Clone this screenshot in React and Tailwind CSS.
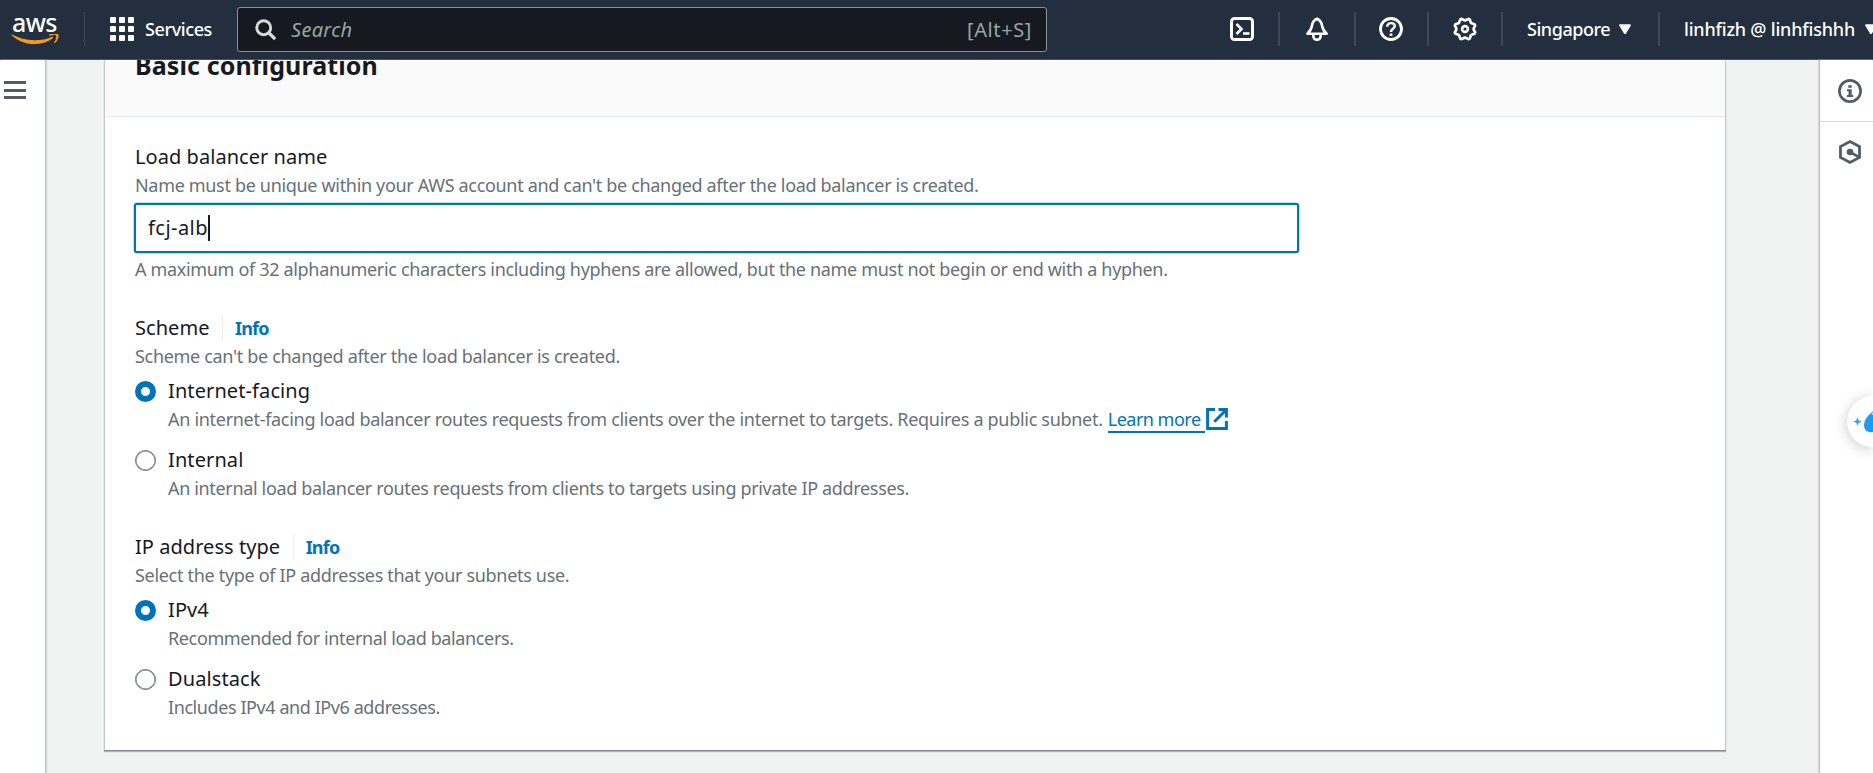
function Separator({ className }) {
  return <div className={`h-[34px] w-0.5 shrink-0 bg-[#414750] ${className}`} />;
}

function AwsLogo() {
  return (
    <div className="ml-[11px] flex w-12 shrink-0 flex-col">
      <span className="h-[21px] pl-px text-[25px] leading-[18px] font-medium tracking-[-0.6px] text-white">aws</span>
      <svg className="h-[11px] w-12" viewBox="0 0 48 11" fill="none">
        <path d="M0.6 1.2C0.2 0.8 0.6 0.2 1.4 0.6C7.5 4 15 6.3 23.5 6.3C30 6.3 35.500 5.200 40.600 3C41.900 2.500 42.800 3.600 41.500 4.500C36.500 8.200 30 10.100 23.500 10.100C14.500 10.100 6.500 6.800 0.600 1.200Z" fill="#f7981f" />
        <path d="M38.800 1.100C42 -0.200 45.500 0 46.500 0.500C47.400 1.500 46.400 6 43.800 8.200" stroke="#f7981f" strokeWidth="1.500" strokeLinecap="round" />
        <path d="M44 0.200H47V3.500L44.500 6L45.200 2Z" fill="#f7981f" />
      </svg>
    </div>
  );
}

function GridIcon() {
  return (
    <div className="ml-[25px] grid size-6 shrink-0 grid-cols-3 gap-[3px]">
      {[...Array(9).keys()].map((i) => (
        <span key={i} className="size-1.5 rounded-[1px] bg-white" />
      ))}
    </div>
  );
}

function IconSvg({ className, children, strokeWidth = 3, size = 24 }) {
  return (
    <svg className={`shrink-0 ${className}`} width={size} height={size} viewBox="0 0 24 24" fill="none" stroke="currentColor" strokeWidth={strokeWidth}>
      {children}
    </svg>
  );
}

function Caret({ className }) {
  return (
    <svg className={`h-[11px] w-3 shrink-0 ${className}`} viewBox="0 0 12 11" fill="currentColor">
      <path d="M0.700 0.300H11.300L12 1.300L6.700 10H5.300L0 1.300Z" />
    </svg>
  );
}

const gearPoints = [...Array(32).keys()]
  .map((i) => {
    const angle = ((i + 0.5) * Math.PI) / 16 - Math.PI / 8;
    const radius = i % 4 < 2 ? 8.7 : 10.7;
    const turn = angle + (i % 2 ? -0.03 : 0.03) + Math.PI / 16;
    return `${(12 + radius * Math.cos(turn)).toFixed(2)},${(12 + radius * Math.sin(turn)).toFixed(2)}`;
  })
  .join(" ");

function Header() {
  return (
    <header className="flex h-[60px] shrink-0 items-center overflow-hidden border-b border-[#49535f] bg-[#232f3e] pb-px text-white">
      <AwsLogo />
      <div className="ml-[25px] h-[34px] w-px shrink-0 bg-[#414750]" />
      <GridIcon />
      <span className="ml-[11px] w-[68px] shrink-0 text-[18px] leading-6 font-medium tracking-[-0.4px] whitespace-nowrap">Services</span>
      <div className="mt-px ml-[24px] flex h-[45px] w-[810px] shrink-0 items-center rounded-[3px] border border-[#879596] bg-[#16191f] pr-[14px] pl-[17px] text-[#95a5a6]">
        <IconSvg className="text-[#d5dbdb]" size={22} strokeWidth={3.2}>
          <circle cx="9.500" cy="9.500" r="7.600" />
          <path d="M15 15L22 22" strokeWidth="3.600" />
        </IconSvg>
        <span className="ml-[14px] flex-1 text-[20px] leading-7 tracking-[0.3px] italic">Search</span>
        <span className="text-[20px] leading-7 tracking-[0.6px]">[Alt+S]</span>
      </div>
      <IconSvg className="ml-[183px]">
        <rect x="1.500" y="1.500" width="21" height="21" rx="3" />
        <path d="M6.500 7L11.500 12L6.500 17" strokeWidth="2.600" />
        <path d="M13 16.500H19.500" strokeWidth="2.600" />
      </IconSvg>
      <Separator className="ml-6" />
      <IconSvg className="ml-[25px]" strokeWidth={2.6}>
        <path d="M2.300 16.700H21.700C19 14.500 17.600 12.500 17 8.500C16.600 5.200 14.800 3 12 1.700C9.200 3 7.400 5.200 7 8.500C6.400 12.500 5 14.500 2.300 16.700Z" strokeLinejoin="round" />
        <path d="M8.300 17V19C8.300 21.300 10 22.700 12 22.700C14 22.700 15.700 21.300 15.700 19V17" />
      </IconSvg>
      <Separator className="ml-[25px]" />
      <IconSvg className="ml-[23px]" strokeWidth={2.8}>
        <circle cx="12" cy="12" r="10.500" />
        <path d="M8.200 9.800C8.200 7.300 9.700 6.100 12 6.100C14.300 6.100 15.800 7.300 15.800 9.100C15.800 11.500 12 11.600 12 15" strokeWidth="2.400" />
        <path d="M12 16.500V19" strokeWidth="2.800" />
      </IconSvg>
      <Separator className="ml-6" />
      <IconSvg className="ml-6" strokeWidth={2.7}>
        <polygon points={gearPoints} strokeLinejoin="round" />
        <circle cx="12" cy="12" r="2.900" strokeWidth="2.600" />
      </IconSvg>
      <Separator className="ml-6" />
      <span className="ml-[24px] w-[84px] shrink-0 text-[18px] leading-6 font-medium tracking-[-0.45px] whitespace-nowrap">Singapore</span>
      <Caret className="ml-2" />
      <Separator className="ml-[27px]" />
      <span className="ml-[24px] w-[172px] shrink-0 text-[18px] leading-6 font-medium tracking-[-0.2px] whitespace-nowrap">linhfizh @ linhfishhh</span>
      <Caret className="ml-[9px]" />
    </header>
  );
}

function FieldLabel({ children, info }) {
  return (
    <div className="flex h-[30px] items-center pt-0.5 text-[20px] leading-[30px] tracking-[0.05px]">
      {children}
      {info && (
        <span className="ml-[12.5px] flex h-[26px] items-center border-l border-[#eaeded] pl-3 text-[18px] leading-[26px] font-bold tracking-[-0.8px] text-[#0073bb]">
          Info
        </span>
      )}
    </div>
  );
}

function Description({ className, children }) {
  return <p className={`flex h-[29px] text-[18px] leading-[29px] whitespace-nowrap text-[#687078] ${className}`}>{children}</p>;
}

function RadioOption({ checked, label, children }) {
  return (
    <div className="flex">
      {checked ? (
        <span className="mt-1.5 size-[21px] shrink-0 rounded-full border-[6px] border-[#0073bb] bg-white" />
      ) : (
        <span className="mt-1.5 size-[21px] shrink-0 rounded-full border border-[#687078] bg-white shadow-[inset_0_0_0_0.5px_#687078]" />
      )}
      <div className="ml-3">
        <div className="h-[30px] text-[20px] leading-8 tracking-[0.1px]">{label}</div>
        {children}
      </div>
    </div>
  );
}

function ExternalIcon() {
  return (
    <svg className="mt-[3px] ml-px size-[22px] text-[#0073bb]" viewBox="0 0 22 22" fill="none" stroke="currentColor" strokeWidth="3">
      <path d="M9 1.600H1.600V20.400H20.400V13" />
      <path d="M12.500 1.600H20.400V9.500M20 2L8.300 13.700" />
    </svg>
  );
}

function ConfigCard() {
  return (
    <section className="ml-[58px] flex h-[690px] w-[1622px] shrink-0 flex-col border-x border-[#c3c9c9] bg-white shadow-[0_1px_0_#7d8998,0_2px_1px_#aab7b8]">
      <div className="h-[57px] shrink-0 overflow-hidden border-b border-[#e4e9e9] bg-[#fafafa] pl-[30px]">
        <h2 className="-mt-3 text-[25px] leading-[34px] font-bold tracking-[0.11px]">Basic configuration</h2>
      </div>
      <div className="flex flex-col pt-6 pl-[30px]">
        <FieldLabel>Load balancer name</FieldLabel>
        <Description className="tracking-[-0.325px]">
          Name must be unique within your AWS account and can't be changed after the load balancer is created.
        </Description>
        <div className="mt-[3px] -ml-px flex h-[50px] w-[1165px] items-center rounded-[3px] border-2 border-[#0073bb] bg-white pl-3 text-[20px] leading-7 tracking-[0.45px] shadow-[0_0_0_0.5px_#0073bb80]">
          fcj-alb
          <span className="h-[26px] w-0.5 bg-[#16191f]" />
        </div>
        <Description className="mt-0.5 tracking-[-0.328px]">
          A maximum of 32 alphanumeric characters including hyphens are allowed, but the name must not begin or end with a hyphen.
        </Description>

        <div className="mt-7">
          <FieldLabel info>Scheme</FieldLabel>
          <Description className="tracking-[-0.315px]">Scheme can't be changed after the load balancer is created.</Description>
          <div className="mt-1 flex flex-col gap-2.5">
            <RadioOption checked label="Internet-facing">
              <Description className="tracking-[-0.297px]">
                An internet-facing load balancer routes requests from clients over the internet to targets. Requires a public subnet.
                <span className="ml-[5px] h-[28px] w-[97px] border-b-2 border-[#0073bb] tracking-[-0.5px] text-[#0073bb]">Learn more</span>
                <ExternalIcon />
              </Description>
            </RadioOption>
            <RadioOption label="Internal">
              <Description className="tracking-[-0.34px]">
                An internal load balancer routes requests from clients to targets using private IP addresses.
              </Description>
            </RadioOption>
          </div>
        </div>

        <div className="mt-7">
          <FieldLabel info>IP address type</FieldLabel>
          <Description className="tracking-[-0.31px]">Select the type of IP addresses that your subnets use.</Description>
          <div className="mt-1 flex flex-col gap-2.5">
            <RadioOption checked label="IPv4">
              <Description className="tracking-[-0.37px]">Recommended for internal load balancers.</Description>
            </RadioOption>
            <RadioOption label="Dualstack">
              <Description className="tracking-[-0.42px]">Includes IPv4 and IPv6 addresses.</Description>
            </RadioOption>
          </div>
        </div>
      </div>
    </section>
  );
}

function HelpRail() {
  return (
    <aside className="flex w-[54px] shrink-0 flex-col border-l border-[#b9c0c0] bg-white text-[#545b64] shadow-[-1px_0_1px_#d5dbdb]">
      <div className="flex h-[62px] shrink-0 items-center border-b border-[#d5dbdb] pl-[18px]">
        <IconSvg strokeWidth={2.7}>
          <circle cx="12" cy="12" r="10.600" />
          <path d="M10.300 6.200H13.700V8.800H10.300Z" fill="currentColor" stroke="none" />
          <path d="M9 10.300H13.700V16H15.200V18H9V16H10.500V12.300H9Z" fill="currentColor" stroke="none" />
        </IconSvg>
      </div>
      <div className="flex h-[60px] shrink-0 items-center pl-[18px]">
        <IconSvg strokeWidth={2.8}>
          <path d="M12 1.600L21.500 6.600V17.400L12 22.400L2.500 17.400V6.600Z" />
          <circle cx="12" cy="12" r="3.300" fill="currentColor" stroke="none" />
          <path d="M12 12L20.500 16.800" strokeWidth="2.600" />
        </IconSvg>
      </div>
    </aside>
  );
}

function FloatingAssistant() {
  return (
    <div className="absolute top-[396px] left-[1847px] flex h-[51px] w-[26px] items-center overflow-visible rounded-l-full bg-white shadow-[0_2px_14px_rgba(0,0,0,0.22)]">
      <svg className="h-[51px] w-[26px]" viewBox="0 0 26 51">
        <path d="M10.500 21.300L11.800 24.400L14.800 25.500L11.800 26.700L10.500 29.800L9.200 26.700L6.200 25.500L9.200 24.400Z" fill="#27a9ef" />
        <path d="M26 15C22 18.500 17 23.500 17 29.200C17 33.700 20.300 36.300 24 36.300C24.700 36.300 25.400 36.200 26 36Z" fill="#1d9bf0" />
        <path d="M26 15.500L24.300 18.200L26 19.200Z" fill="#a5dcfb" />
      </svg>
    </div>
  );
}

export default function App() {
  return (
    <div className="relative flex h-[773px] w-[1873px] flex-col overflow-hidden bg-[#f1f3f3] font-['Noto_Sans',sans-serif] text-[#16191f]">
      <Header />
      <div className="flex min-h-0 flex-1">
        <nav className="w-[46px] shrink-0 border-r border-[#b9c0c0] bg-white pt-[21px] pl-1 shadow-[1px_0_1px_#d5dbdb]">
          <div className="flex w-[22px] flex-col gap-[4.5px]">
            <span className="h-[3px] bg-[#545b64]" />
            <span className="h-[3px] bg-[#545b64]" />
            <span className="h-[3px] bg-[#545b64]" />
          </div>
        </nav>
        <main className="min-w-0 flex-1">
          <ConfigCard />
        </main>
        <HelpRail />
      </div>
      <FloatingAssistant />
    </div>
  );
}
